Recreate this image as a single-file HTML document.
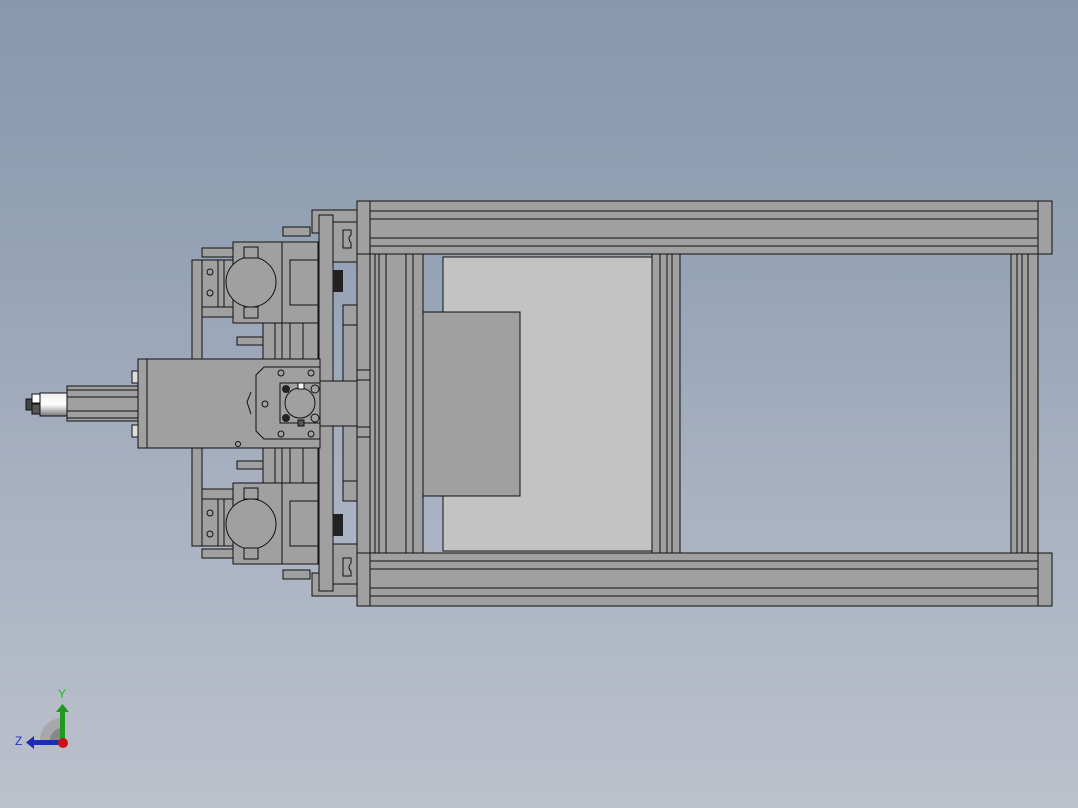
<!DOCTYPE html>
<html><head><meta charset="utf-8"><style>
html,body{margin:0;padding:0;width:1078px;height:808px;overflow:hidden}
body{background:linear-gradient(#8797ad 0%,#97a4b7 35%,#aab3c3 65%,#bcc1cb 100%)}
svg{position:absolute;left:0;top:0}
.p{fill:#a0a0a0;stroke:#111;stroke-width:1}
.l{stroke:#111;stroke-width:1;fill:none}
.lt{fill:#c3c3c3;stroke:#111;stroke-width:1}
.d{fill:#222}
text{font-family:"Liberation Sans",sans-serif;font-size:12px}
</style></head><body>
<svg width="1078" height="808" viewBox="0 0 1078 808">
<defs>
<g id="clamp">
 <rect class="p" x="192" y="260" width="10" height="143"/>
 <rect class="p" x="202" y="260" width="31" height="47"/>
 <line class="l" x1="218" y1="260" x2="218" y2="307"/><line class="l" x1="224" y1="260" x2="224" y2="307"/>
 <circle class="l" cx="210" cy="272" r="3"/><circle class="l" cx="210" cy="293" r="3"/>
 <rect class="p" x="202" y="248" width="31" height="9"/>
 <rect class="p" x="202" y="307" width="31" height="10"/>
 <rect class="p" x="233" y="242" width="85" height="81"/>
 <line class="l" x1="282" y1="242" x2="282" y2="323"/>
 <rect class="p" x="290" y="260" width="28" height="45"/>
 <circle class="p" cx="251" cy="282" r="25"/>
 <rect class="p" x="244" y="247" width="14" height="11"/>
 <rect class="p" x="244" y="307" width="14" height="11"/>
 <rect class="p" x="263" y="323" width="55" height="80"/>
 <line class="l" x1="275" y1="323" x2="275" y2="403"/><line class="l" x1="282" y1="323" x2="282" y2="403"/><line class="l" x1="290" y1="323" x2="290" y2="403"/><line class="l" x1="303" y1="323" x2="303" y2="403"/>
 <rect class="p" x="237" y="337" width="26" height="8"/>
 <rect class="p" x="283" y="227" width="27" height="9"/>
 <rect class="p" x="312" y="210" width="45" height="23"/>
 <rect class="p" x="319" y="215" width="14" height="190"/>
 <rect class="p" x="333" y="222" width="24" height="40"/>
 <path class="l" d="M343 230h8v5q-4 3 0 8v5h-8z"/>
 <rect class="d" x="333" y="270" width="10" height="22"/>
 <rect class="p" x="343" y="305" width="14" height="20"/>
 <rect class="p" x="343" y="325" width="14" height="78"/>
</g>
</defs>
<!-- frame top rail -->
<rect class="p" x="357" y="201" width="695" height="53"/>
<line class="l" x1="370" y1="211" x2="1038" y2="211"/><line class="l" x1="370" y1="219" x2="1038" y2="219"/><line class="l" x1="370" y1="238" x2="1038" y2="238"/><line class="l" x1="370" y1="246" x2="1038" y2="246"/>
<line class="l" x1="370" y1="201" x2="370" y2="254"/><line class="l" x1="1038" y1="201" x2="1038" y2="254"/>
<!-- bottom rail -->
<rect class="p" x="357" y="553" width="695" height="53"/>
<line class="l" x1="370" y1="561" x2="1038" y2="561"/><line class="l" x1="370" y1="569" x2="1038" y2="569"/><line class="l" x1="370" y1="588" x2="1038" y2="588"/><line class="l" x1="370" y1="596" x2="1038" y2="596"/>
<line class="l" x1="370" y1="553" x2="370" y2="606"/><line class="l" x1="1038" y1="553" x2="1038" y2="606"/>
<rect class="p" x="357" y="254" width="13" height="299"/>
<!-- left verticals -->
<rect class="p" x="370" y="254" width="53" height="299"/>
<line class="l" x1="375" y1="254" x2="375" y2="553"/><line class="l" x1="379" y1="254" x2="379" y2="553"/><line class="l" x1="386" y1="254" x2="386" y2="553"/><line class="l" x1="406" y1="254" x2="406" y2="553"/><line class="l" x1="413" y1="254" x2="413" y2="553"/>
<!-- panel -->
<rect class="lt" x="443" y="257" width="209" height="294"/>
<rect class="p" x="423" y="312" width="97" height="184"/>
<!-- middle verticals -->
<rect class="p" x="652" y="254" width="28" height="299"/>
<line class="l" x1="660" y1="254" x2="660" y2="553"/><line class="l" x1="667" y1="254" x2="667" y2="553"/><line class="l" x1="672" y1="254" x2="672" y2="553"/>
<!-- right verticals -->
<rect class="p" x="1011" y="254" width="27" height="299"/>
<line class="l" x1="1017" y1="254" x2="1017" y2="553"/><line class="l" x1="1022" y1="254" x2="1022" y2="553"/><line class="l" x1="1028" y1="254" x2="1028" y2="553"/>
<!-- clamps -->
<use href="#clamp"/>
<use href="#clamp" transform="translate(0,806) scale(1,-1)"/>
<!-- center block -->
<rect class="p" x="138" y="359" width="182" height="89"/>
<line class="l" x1="147" y1="359" x2="147" y2="448"/>
<circle class="l" cx="238" cy="444" r="2.5"/>
<rect class="p" x="132" y="371" width="6" height="12" style="fill:#ddd"/>
<rect class="p" x="132" y="425" width="6" height="12" style="fill:#ddd"/>
<rect class="p" x="67" y="386" width="71" height="35"/>
<line class="l" x1="67" y1="390" x2="138" y2="390"/><line class="l" x1="67" y1="397" x2="138" y2="397"/><line class="l" x1="67" y1="411" x2="138" y2="411"/><line class="l" x1="67" y1="418" x2="138" y2="418"/>
<linearGradient id="g" x1="0" y1="0" x2="0" y2="1"><stop offset="0" stop-color="#eee"/><stop offset=".5" stop-color="#fff"/><stop offset="1" stop-color="#777"/></linearGradient>
<rect x="40" y="393" width="27" height="23" fill="url(#g)" stroke="#111"/>
<rect x="32" y="394" width="8" height="9" fill="#fff" stroke="#111"/>
<rect x="32" y="404" width="8" height="10" fill="#555" stroke="#111"/>
<rect x="26" y="399" width="6" height="11" fill="#444" stroke="#111"/>
<path class="p" d="M264 367H320V439H264L256 431V375Z"/>
<circle class="l" cx="281" cy="373" r="3"/><circle class="l" cx="311" cy="373" r="3"/><circle class="l" cx="281" cy="434" r="3"/><circle class="l" cx="311" cy="434" r="3"/>
<circle class="l" cx="265" cy="404" r="3"/>
<path class="l" d="M251 392l-4 10 4 12"/>
<rect class="p" x="280" y="383" width="40" height="40"/>
<circle class="l" cx="300" cy="403" r="15"/>
<circle fill="#222" cx="286" cy="389" r="4"/><circle fill="#222" cx="286" cy="418" r="4"/>
<circle class="l" cx="315" cy="389" r="4"/><circle class="l" cx="315" cy="418" r="4"/>
<rect x="298" y="383" width="6" height="6" fill="#fff" stroke="#111"/>
<rect x="298" y="420" width="6" height="6" fill="#555" stroke="#111"/>
<rect class="p" x="320" y="381" width="37" height="45"/>
<rect class="p" x="357" y="370" width="13" height="10"/>
<rect class="p" x="357" y="427" width="13" height="10"/>
<!-- triad -->
<path d="M62 742V718A22 22 0 0 0 40 740Z" fill="#a3a3a3" opacity=".8"/>
<path d="M62 742V728A12 12 0 0 0 50 740Z" fill="#888"/>
<rect x="60" y="710" width="5" height="32" fill="#1e9a1e"/>
<path d="M56 712L62.5 704 69 712Z" fill="#1e9a1e"/>
<rect x="32" y="740" width="30" height="5" fill="#1c2bb8"/>
<path d="M34 736L26 742.5 34 749Z" fill="#1c2bb8"/>
<circle cx="63" cy="743" r="5" fill="#cc1111"/>
<text x="58" y="698" fill="#22bb22" font-size="11">Y</text>
<text x="15" y="745" fill="#2233cc" font-size="13">Z</text>
</svg>
</body></html>
